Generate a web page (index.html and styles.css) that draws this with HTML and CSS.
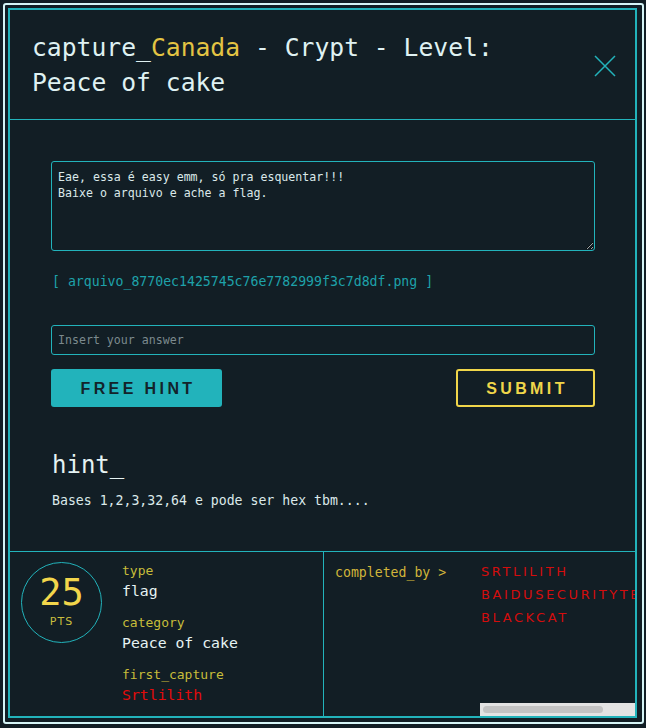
FILE: index.html
```html
<!DOCTYPE html>
<html>
<head>
<meta charset="utf-8">
<link rel="stylesheet" href="styles.css">
</head>
<body>
<div class="frame">
  <div class="modal">
    <header class="head">
      <h1 class="title">capture_<span class="country">Canada</span> - Crypt - Level: Peace of cake</h1>
      <svg class="close" width="22" height="22" viewBox="0 0 22 22"><path d="M1 1 L21 21 M21 1 L1 21" stroke="#22b3bb" stroke-width="1.5" fill="none"/></svg>
    </header>
    <section class="content">
      <textarea class="desc" readonly>Eae, essa é easy emm, só pra esquentar!!!
Baixe o arquivo e ache a flag.</textarea>
      <a class="file">[ arquivo_8770ec1425745c76e7782999f3c7d8df.png ]</a>
      <input class="answer" type="text" placeholder="Insert your answer">
      <div class="actions">
        <button class="btn hint-btn">FREE HINT</button>
        <button class="btn submit-btn">SUBMIT</button>
      </div>
      <h2 class="hint-title">hint_</h2>
      <p class="hint-text">Bases 1,2,3,32,64 e pode ser hex tbm....</p>
    </section>
    <footer class="foot">
      <div class="stats">
        <div class="points">
          <span class="num">25</span>
          <span class="pts">PTS</span>
        </div>
        <div class="info">
          <div class="label">type</div>
          <div class="value">flag</div>
          <div class="label">category</div>
          <div class="value">Peace of cake</div>
          <div class="label">first_capture</div>
          <div class="value red">Srtlilith</div>
        </div>
      </div>
      <div class="completed">
        <div class="comp-label">completed_by &gt;</div>
        <div class="names">
          <div class="name-list">
            <div class="name">SRTLILITH</div>
            <div class="name">BAIDUSECURITYTEAM</div>
            <div class="name">BLACKCAT</div>
          </div>
          <div class="hscroll"><div class="thumb"></div></div>
        </div>
      </div>
    </footer>
  </div>
</div>
</body>
</html>
```
FILE: styles.css
```css
html, body {
  margin: 0;
  padding: 0;
  background: #121e25;
}
body {
  font-family: "DejaVu Sans Mono", monospace;
  color: #e3f1f2;
}
.frame {
  box-sizing: border-box;
  margin: 3px 0 0 3px;
  width: 641px;
  height: 721px;
  border: 2px solid #d6f5f7;
  border-radius: 3px;
  padding: 3px 5px 4px 3px;
}
.modal {
  box-sizing: border-box;
  height: 100%;
  border: 2px solid #22b3bb;
  display: flex;
  flex-direction: column;
}
.head {
  display: flex;
  align-items: center;
  justify-content: space-between;
  height: 110px;
  box-sizing: border-box;
  padding: 1px 19px 0 22px;
  border-bottom: 1px solid #22b3bb;
}
.title {
  margin: 0;
  max-width: 500px;
  font-weight: normal;
  font-size: 24.7px;
  line-height: 35px;
  color: #dff1f2;
}
.country {
  color: #e3c443;
}
.close {
  display: block;
  margin-top: 2px;
}
.content {
  flex: 1;
  display: flex;
  flex-direction: column;
  padding: 41px 40px 0 41px;
}
.desc {
  box-sizing: border-box;
  height: 90px;
  width: 100%;
  background: transparent;
  border: 1px solid #22b3bb;
  border-radius: 3px;
  padding: 7px 6px;
  color: #dbe9ea;
  font-family: "DejaVu Sans Mono", monospace;
  font-size: 11.6px;
  line-height: 16px;
  outline: none;
}
.file {
  margin-top: 22px;
  padding-left: 1px;
  font-size: 13.2px;
  line-height: 18px;
  color: #1ea2aa;
}
.answer {
  box-sizing: border-box;
  margin-top: 34px;
  height: 30px;
  width: 100%;
  background: transparent;
  border: 1px solid #22b3bb;
  border-radius: 3px;
  padding: 0 6px;
  color: #dbe9ea;
  font-family: "DejaVu Sans Mono", monospace;
  font-size: 11.6px;
  outline: none;
}
.answer::placeholder {
  color: #7c8a8e;
}
.actions {
  display: flex;
  justify-content: space-between;
  margin-top: 14px;
}
.btn {
  box-sizing: border-box;
  height: 38px;
  border-radius: 3px;
  font-family: "Liberation Sans", sans-serif;
  font-weight: bold;
  font-size: 16px;
  letter-spacing: 3.4px;
  padding: 2px 0 0 3px;
  cursor: pointer;
}
.hint-btn {
  width: 171px;
  background: #22b3bb;
  border: none;
  color: #13232a;
}
.submit-btn {
  width: 139px;
  background: transparent;
  border: 2px solid #f0d64a;
  color: #f0d64a;
}
.hint-title {
  margin: 43px 0 0 1px;
  font-weight: normal;
  font-size: 24px;
  line-height: 30px;
  color: #e6f3f3;
}
.hint-text {
  margin: 12px 0 0 1px;
  font-size: 13.2px;
  line-height: 18px;
  color: #dbe9ea;
}
.foot {
  display: flex;
  height: 165px;
  box-sizing: border-box;
  border-top: 1px solid #22b3bb;
}
.stats {
  width: 314px;
  box-sizing: border-box;
  border-right: 1px solid #22b3bb;
  display: flex;
  padding: 10px 0 0 11px;
}
.points {
  box-sizing: border-box;
  width: 81px;
  height: 81px;
  border: 1px solid #22b3bb;
  border-radius: 50%;
  display: flex;
  flex-direction: column;
  align-items: center;
}
.num {
  margin-top: 10px;
  font-size: 37px;
  line-height: 40px;
  color: #f2d64b;
}
.pts {
  margin-top: 2px;
  font-family: "DejaVu Sans", sans-serif;
  font-size: 11px;
  letter-spacing: 1px;
  color: #c9bf3e;
}
.info {
  margin-left: 20px;
  margin-top: -1px;
}
.label {
  font-size: 13px;
  line-height: 20px;
  color: #c7bd3a;
}
.value {
  font-size: 14.8px;
  line-height: 20px;
  margin-bottom: 12px;
  color: #e6f3f3;
}
.value.red {
  color: #e30b0b;
}
.completed {
  flex: 1;
  display: flex;
  min-width: 0;
}
.comp-label {
  width: 156px;
  box-sizing: border-box;
  padding: 11px 0 0 11px;
  font-size: 13.2px;
  line-height: 20px;
  color: #d1b53a;
  flex-shrink: 0;
}
.names {
  flex: 1;
  min-width: 0;
  display: flex;
  flex-direction: column;
}
.name-list {
  flex: 1;
  overflow: hidden;
  padding-top: 8px;
}
.hscroll {
  height: 13px;
  background: #e3e3e3;
  display: flex;
  align-items: center;
  padding-left: 3px;
}
.thumb {
  width: 120px;
  height: 7px;
  border-radius: 4px;
  background: #c3c3c3;
}
.name {
  font-family: "DejaVu Sans", sans-serif;
  font-size: 13px;
  line-height: 23px;
  letter-spacing: 2.6px;
  padding-left: 1px;
  white-space: nowrap;
  color: #d40d0d;
}
```
